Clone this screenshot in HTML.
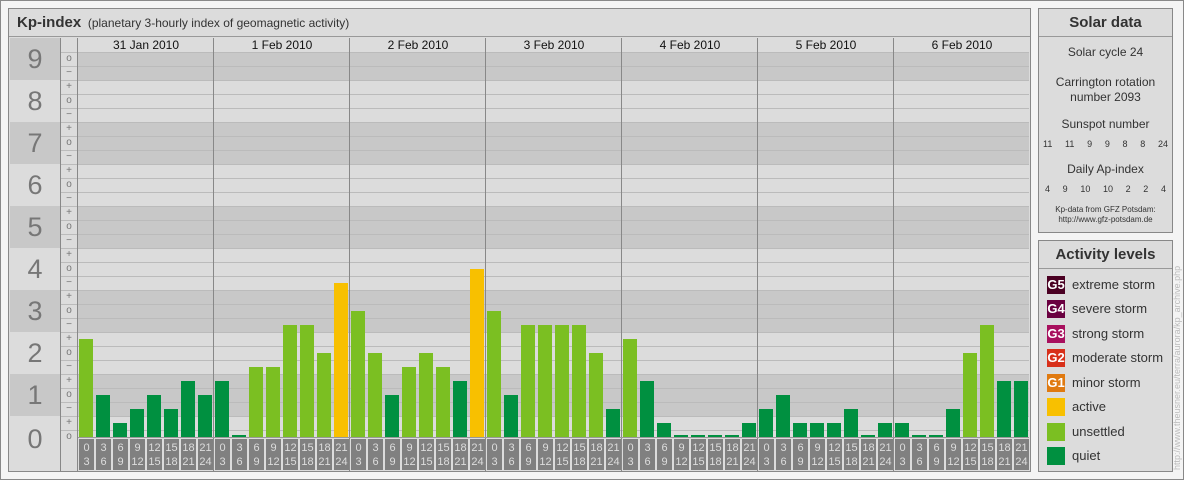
<!DOCTYPE html>
<html><head><meta charset="utf-8"><style>
*{margin:0;padding:0;box-sizing:border-box}
body{width:1184px;height:480px;background:#f4f4f4;position:relative;overflow:hidden;font-family:"Liberation Sans",sans-serif}
.a{position:absolute}
.box{position:absolute;background:#dcdcdc;border:1px solid #888}
.t{position:absolute;left:0;right:0;top:0;height:28px;border-bottom:1px solid #999;text-align:center;font-weight:bold;font-size:15px;color:#333;line-height:28px}
.c{position:absolute;left:0;right:0;text-align:center;color:#333}
.lg{position:absolute;left:8px;width:18px;height:18px;color:#fff;font-size:13px;font-weight:bold;line-height:18px;text-align:center}
.ll{position:absolute;left:33px;font-size:13px;color:#333;line-height:18px}
</style></head><body>
<div class="a" style="left:0;top:0;width:1184px;height:480px;border:1px solid #888"></div>
<div class="box" style="left:8px;top:8px;width:1023px;height:464px">
<div class="a" style="left:0;top:0;right:0;height:28px;border-bottom:1px solid #999;font-size:12px;color:#333;line-height:28px;padding-left:8px"><b style="font-size:15px">Kp-index</b>&nbsp;&nbsp;(planetary 3-hourly index of geomagnetic activity)</div>
</div>
<div id="chart" class="a" style="left:9px;top:38px;width:1021px;height:433px"></div>
<div class="box" style="left:1038px;top:8px;width:135px;height:225px">
<div class="t">Solar data</div>
<div class="c" style="top:36px;font-size:12px">Solar cycle 24</div>
<div class="c" style="top:66px;font-size:12px;line-height:15px">Carrington rotation<br>number 2093</div>
<div class="c" style="top:108px;font-size:12px">Sunspot number</div>
<div class="a" style="left:4px;right:4px;top:130px;font-size:9px;color:#333;display:flex;justify-content:space-between"><span>11</span><span>11</span><span>9</span><span>9</span><span>8</span><span>8</span><span>24</span></div>
<div class="c" style="top:153px;font-size:12px">Daily Ap-index</div>
<div class="a" style="left:6px;right:6px;top:175px;font-size:9px;color:#333;display:flex;justify-content:space-between"><span>4</span><span>9</span><span>10</span><span>10</span><span>2</span><span>2</span><span>4</span></div>
<div class="c" style="top:196px;font-size:8px;line-height:10px">Kp-data from GFZ Potsdam:<br>http://www.gfz-potsdam.de</div>
</div>
<div class="box" style="left:1038px;top:240px;width:135px;height:232px">
<div class="t">Activity levels</div>
<div class="lg" style="top:35px;background:#4a0022">G5</div><div class="ll" style="top:35px">extreme storm</div>
<div class="lg" style="top:59px;background:#6a0040">G4</div><div class="ll" style="top:59px">severe storm</div>
<div class="lg" style="top:84px;background:#a8105e">G3</div><div class="ll" style="top:84px">strong storm</div>
<div class="lg" style="top:108px;background:#d8301a">G2</div><div class="ll" style="top:108px">moderate storm</div>
<div class="lg" style="top:133px;background:#e07a10">G1</div><div class="ll" style="top:133px">minor storm</div>
<div class="lg" style="top:157px;background:#f8c000"></div><div class="ll" style="top:157px">active</div>
<div class="lg" style="top:182px;background:#7bbf22"></div><div class="ll" style="top:182px">unsettled</div>
<div class="lg" style="top:206px;background:#009040"></div><div class="ll" style="top:206px">quiet</div>
</div>
<div class="a" style="left:1172px;top:470px;width:230px;transform:rotate(-90deg);transform-origin:0 0;font-size:9px;color:#bbb;white-space:nowrap">http://www.theusner.eu/terra/aurora/kp_archive.php</div>
<script>
var ch=document.getElementById('chart'),h='';
var O=9,T=38;
function r(x,y,w,hh,s){h+='<div class="a" style="left:'+(x-O)+'px;top:'+(y-T)+'px;width:'+w+'px;height:'+hh+'px;'+s+'"></div>';}
for(var L=9;L>=0;L--){
 var y0=L==9?38:80+(8-L)*42, y1=L==0?471:(L==9?80:y0+42);
 var dark=(L%2==1);
 r(10,y0,50,y1-y0,'background:'+(dark?'#c8c8c8':'#dcdcdc'));
 h+='<div class="a" style="left:1px;top:'+(y0-T)+'px;width:50px;height:42px;font-size:27px;color:#777;text-align:center;line-height:'+(L==0?46:42)+'px">'+L+'</div>';
 var p0=L==9?52:y0, p1=L==0?437:y1;
 r(78,p0,951,p1-p0,'background:'+(dark?'#c8c8c8':'#dcdcdc'));
}
r(78,38,951,14,'background:#dcdcdc');
r(60,38,18,433,'background:#dcdcdc');
for(var k=0;k<28;k++){var y=52+14*k;r(60,y,969,1,'background:#bbb');}
for(var k=0;k<28;k++){
 h+='<div class="a" style="left:'+(60-O)+'px;top:'+(52+14*k-T)+'px;width:18px;height:14px;font-size:10px;color:#777;text-align:center;line-height:14px">'+['o','\u2212','+'][k%3]+'</div>';}
r(60,38,1,433,'background:#888');r(77,38,1,433,'background:#888');
var days=['31 Jan 2010','1 Feb 2010','2 Feb 2010','3 Feb 2010','4 Feb 2010','5 Feb 2010','6 Feb 2010'];
var kp=[[7,3,1,2,3,2,4,3],[4,0,5,5,8,8,6,11],[9,6,3,5,6,5,4,12],[9,3,8,8,8,8,6,2],[7,4,1,0,0,0,0,1],[2,3,1,1,1,2,0,1],[1,0,0,2,6,8,4,4]];
var lb=['0','3','6','9','12','15','18','21','24'];
for(var d=0;d<7;d++){var x0=78+136*d;
 h+='<div class="a" style="left:'+(x0-O)+'px;top:0;width:136px;height:14px;font-size:12px;color:#111;text-align:center;line-height:14px">'+days[d]+'</div>';
 for(var i=0;i<8;i++){var v=kp[d][i],bx=x0+1+17*i,hh=v==0?2:v*14;
  var col=v<=4?'#009040':(v<=10?'#7bbf22':'#f8c000');
  r(bx,437-hh,14,hh,'background:'+col);
  h+='<div class="a" style="left:'+(bx-O)+'px;top:'+(439-T)+'px;width:15px;height:31px;background:#808080;color:#ddd;font-size:11px;line-height:14px;text-align:center;padding-top:2px">'+lb[i]+'<br>'+lb[i+1]+'</div>';
 }
 if(d>0)r(x0-1,38,1,433,'background:#888');
}
r(78,437,951,1,'background:#999');
ch.innerHTML=h;
</script>
</body></html>
